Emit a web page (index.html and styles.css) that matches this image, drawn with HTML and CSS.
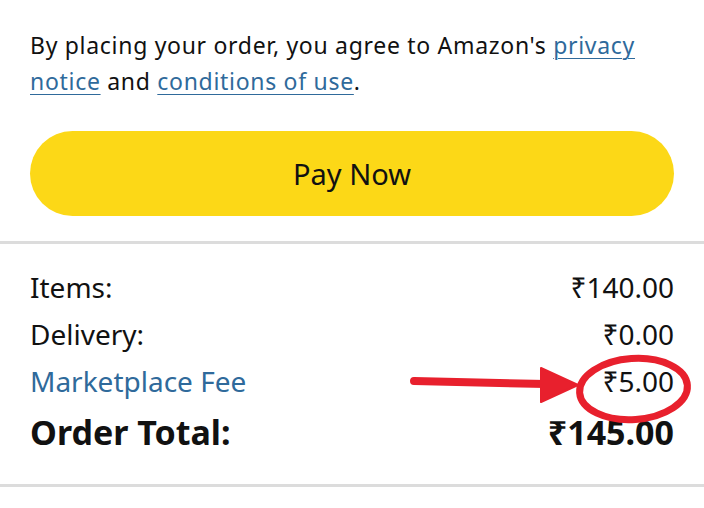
FILE: index.html
```html
<!DOCTYPE html>
<html>
<head>
<meta charset="utf-8">
<link rel="stylesheet" href="styles.css">
</head>
<body>
<div class="page">
  <section class="agree">
    <p class="notice">By placing your order, you agree to Amazon's <a href="#">privacy notice</a> and <a href="#">conditions of use</a>.</p>
    <button class="pay">Pay Now</button>
  </section>
  <section class="summary">
    <div class="row"><span>Items:</span><span>₹140.00</span></div>
    <div class="row"><span>Delivery:</span><span>₹0.00</span></div>
    <div class="row"><span class="link">Marketplace Fee</span><span>₹5.00</span></div>
    <div class="row total"><span>Order Total:</span><span>₹145.00</span></div>
  </section>
  <svg class="annot" width="304" height="100" viewBox="0 0 304 100">
    <path d="M14 41 L146 44" stroke="#e8202d" stroke-width="8" stroke-linecap="round" fill="none"/>
    <polygon points="141,28 178,45 141,62" fill="#e8202d" stroke="#e8202d" stroke-width="2" stroke-linejoin="round"/>
    <ellipse cx="233.5" cy="49" rx="54" ry="30.5" stroke="#e8202d" stroke-width="7" fill="none" transform="rotate(-4 233.5 49)"/>
  </svg>
</div>
</body>
</html>
```

FILE: styles.css
```css
* { box-sizing: border-box; }
html, body { margin: 0; padding: 0; background: #fff; }
body {
  font-family: "Noto Sans", "Open Sans", sans-serif;
  color: #111;
  width: 704px;
  height: 508px;
  overflow: hidden;
}
.page {
  position: relative;
  display: flex;
  flex-direction: column;
}
.agree {
  padding: 27px 30px 25px 30px;
  border-bottom: 3px solid #dcdcdc;
}
.notice {
  margin: 0;
  font-size: 23px;
  letter-spacing: 0.7px;
  line-height: 36px;
  color: #111;
}
.notice a {
  color: #2f6a9b;
  text-decoration: underline;
  text-decoration-thickness: 1px;
  text-underline-offset: 4px;
}
.pay {
  display: flex;
  align-items: center;
  justify-content: center;
  width: 644px;
  height: 85px;
  margin-top: 32px;
  border: none;
  border-radius: 43px;
  background: #fcd817;
  font-family: inherit;
  font-size: 29px;
  color: #111;
  padding: 0;
}
.summary {
  padding: 20px 30px 25px 30px;
  border-bottom: 3px solid #dcdcdc;
  display: flex;
  flex-direction: column;
}
.row {
  display: flex;
  justify-content: space-between;
  font-size: 28px;
  line-height: 47px;
  height: 47px;
}
.link { color: #2f6a9b; }
.total {
  font-weight: bold;
  font-size: 34px;
  line-height: 54px;
  height: 54px;
}
.annot {
  position: absolute;
  left: 400px;
  top: 340px;
}
```
